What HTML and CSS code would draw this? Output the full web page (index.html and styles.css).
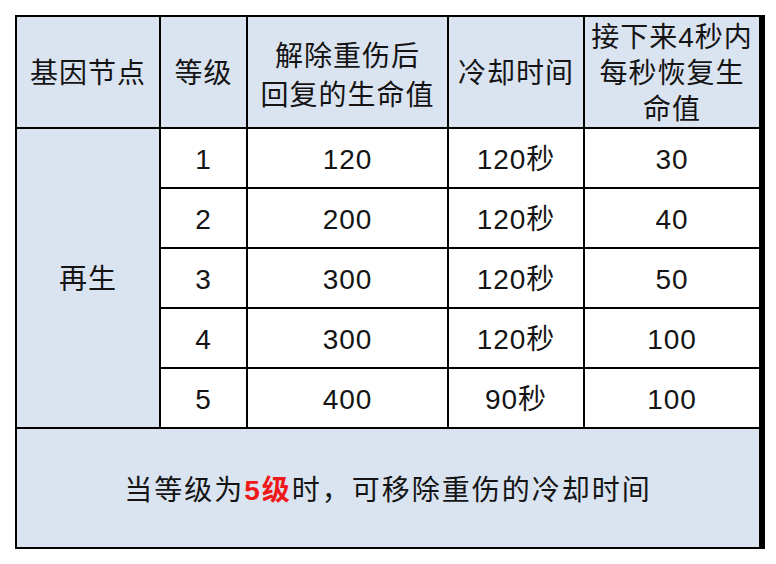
FILE: index.html
```html
<!DOCTYPE html>
<html lang="zh-CN">
<head>
<meta charset="utf-8">
<link rel="stylesheet" href="styles.css">
</head>
<body>
<div class="table">
  <div class="cell head">基因节点</div>
  <div class="cell head">等级</div>
  <div class="cell head two">解除重伤后<br>回复的生命值</div>
  <div class="cell head">冷却时间</div>
  <div class="cell head tall"><span>接下来4秒内<br>每秒恢复生<br>命值</span></div>

  <div class="cell node">再生</div>
  <div class="cell">1</div><div class="cell">120</div><div class="cell">120秒</div><div class="cell">30</div>
  <div class="cell">2</div><div class="cell">200</div><div class="cell">120秒</div><div class="cell">40</div>
  <div class="cell">3</div><div class="cell">300</div><div class="cell">120秒</div><div class="cell">50</div>
  <div class="cell">4</div><div class="cell">300</div><div class="cell">120秒</div><div class="cell">100</div>
  <div class="cell">5</div><div class="cell">400</div><div class="cell">90秒</div><div class="cell">100</div>

  <div class="cell foot">当等级为<b class="hl">5级</b>时，可移除重伤的冷却时间</div>
</div>
</body>
</html>
```

FILE: styles.css
```css
html, body {
  margin: 0;
  padding: 0;
  background: #ffffff;
}
body {
  padding: 15px;
  font-family: "Liberation Sans", "Noto Sans CJK SC", sans-serif;
  color: #141414;
}
.table {
  display: grid;
  width: 746px;
  grid-template-columns: 142px 85px 199px 134px 174px;
  grid-template-rows: 110px repeat(5, 58px) 118px;
  gap: 2px;
  padding: 2px;
  background: #000000;
}
.cell {
  background: #ffffff;
  display: flex;
  align-items: center;
  justify-content: center;
  text-align: center;
  font-size: 28px;
  line-height: 38px;
  letter-spacing: 1px;
  padding-top: 3px;
  overflow: hidden;
}
.head {
  background: #dae3f0;
}
.two {
  line-height: 39px;
  padding-top: 7px;
}
.tall {
  align-items: flex-start;
  line-height: 36px;
  padding-top: 0;
}
.tall span {
  display: block;
  padding-top: 3px;
}
.node {
  background: #dae3f0;
  grid-column: 1;
  grid-row: 2 / span 5;
}
.foot {
  background: #dae3f0;
  grid-column: 1 / span 5;
  letter-spacing: 2px;
  padding-top: 5px;
}
.hl {
  color: #f01818;
  font-weight: 700;
}
```
